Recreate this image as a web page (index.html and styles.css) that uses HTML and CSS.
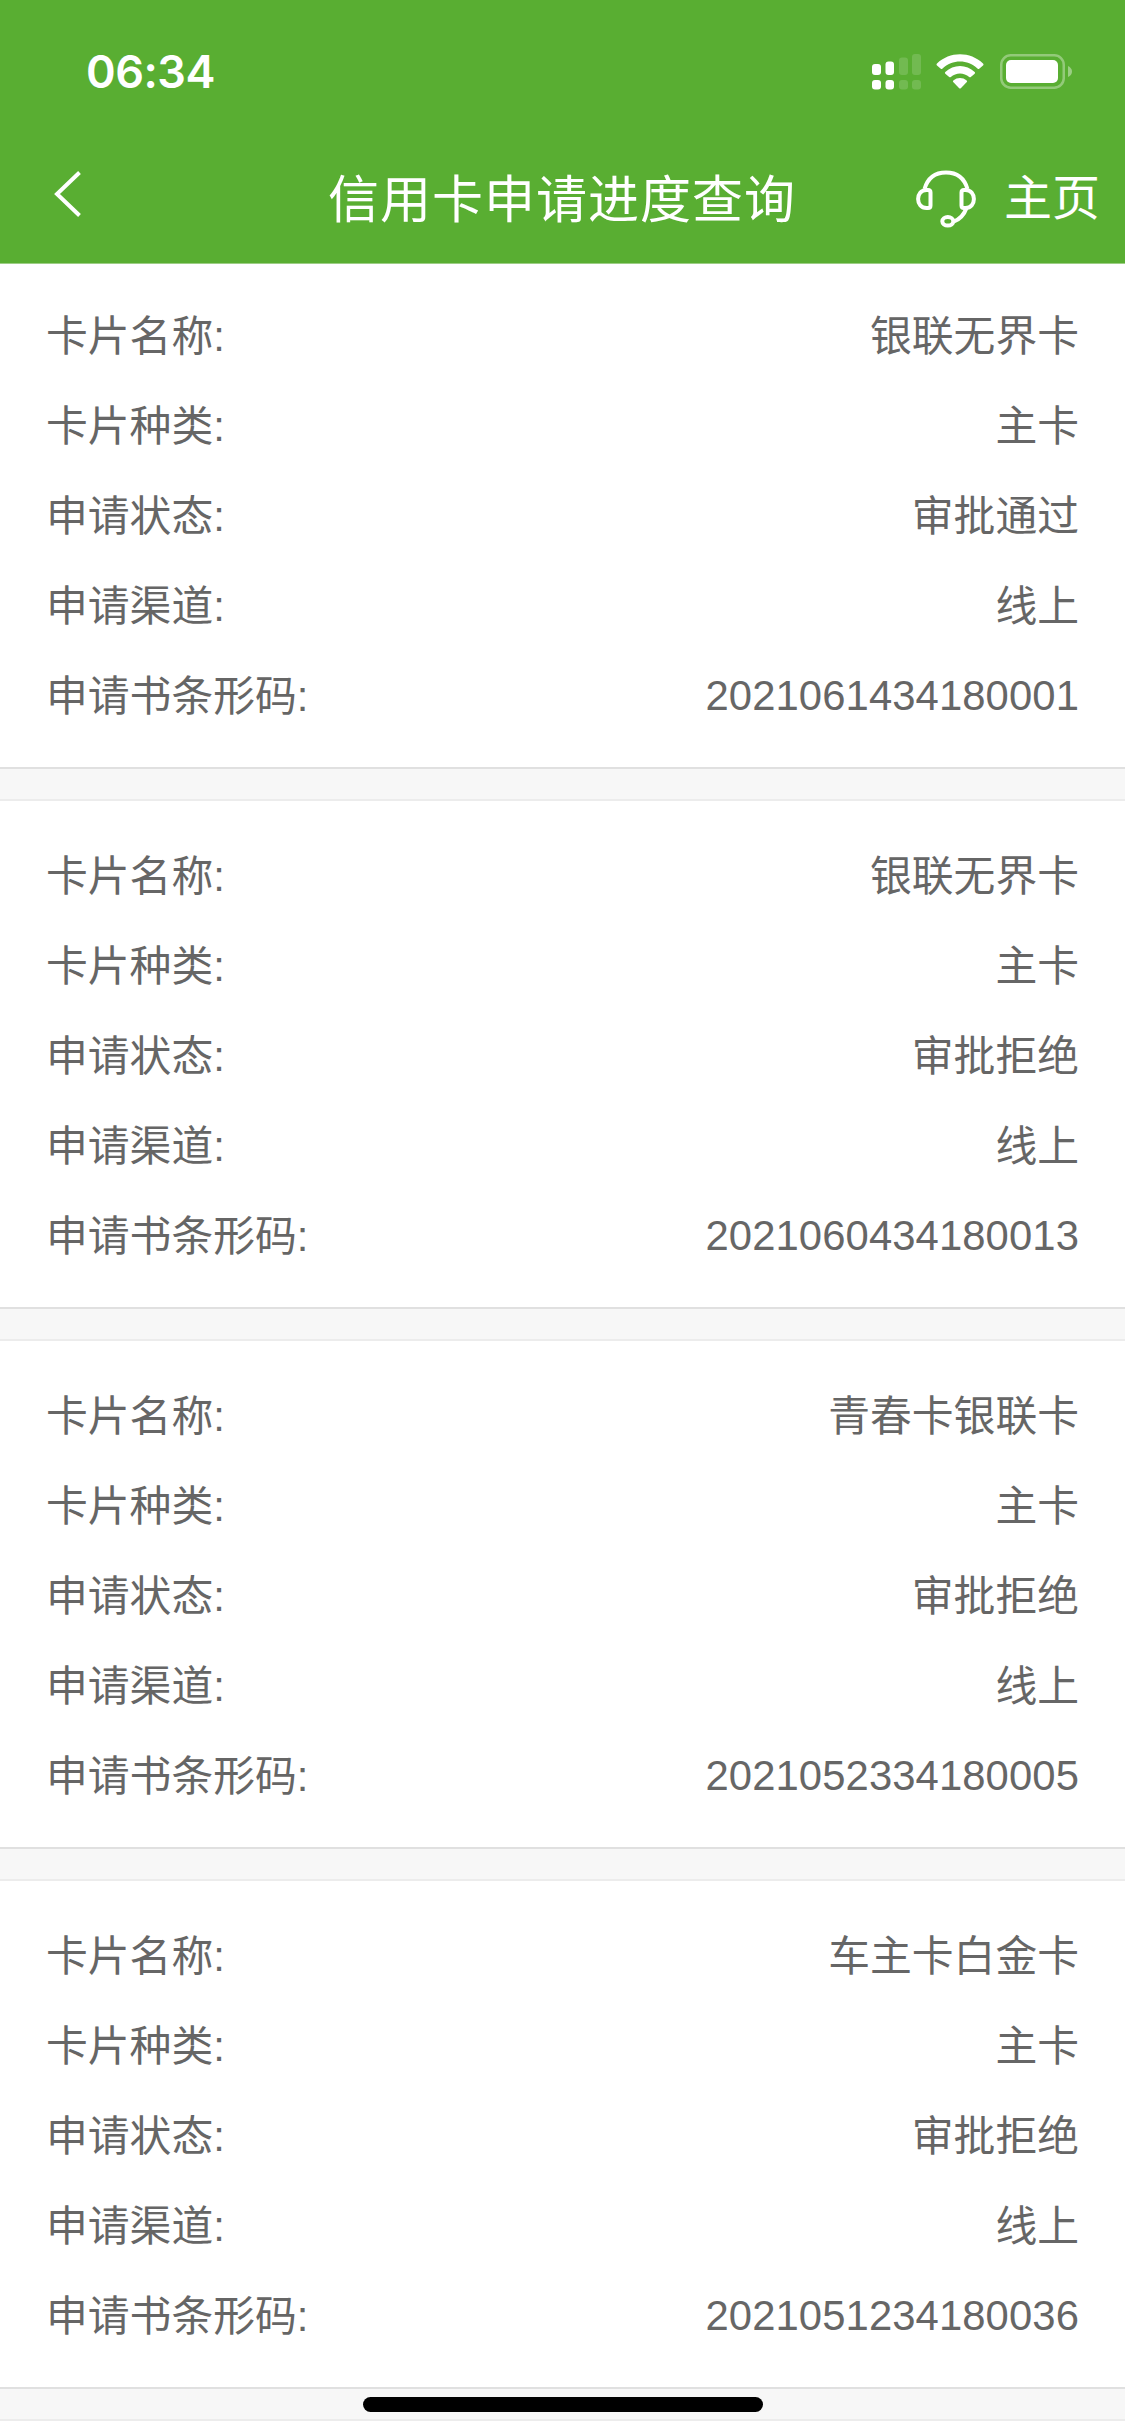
FILE: index.html
```
<!DOCTYPE html>
<html lang="zh-CN">
<head>
  <meta charset="UTF-8">
  <title>信用卡申请进度查询</title>
  <link rel="stylesheet" href="styles.css">
</head>
<body>

  <header class="header">
    <div class="status-bar">
      <span class="time">06:34</span>
      <div class="status-icons">
        <svg class="signal" width="50" height="36" viewBox="0 0 50 36" fill="#fff">
          <rect x="0" y="10" width="9" height="11" rx="3"/>
          <rect x="13.5" y="7.5" width="8.5" height="13.5" rx="3"/>
          <rect x="0" y="26" width="9" height="9.5" rx="3"/>
          <rect x="13.5" y="26" width="8.5" height="9.5" rx="3"/>
          <g opacity="0.15">
            <rect x="27" y="3.5" width="9" height="17.5" rx="3"/>
            <rect x="40" y="0" width="9" height="21" rx="3"/>
            <rect x="27" y="26" width="9" height="9.5" rx="3"/>
            <rect x="40" y="26" width="9" height="9.5" rx="3"/>
          </g>
        </svg>
        <svg class="wifi" width="48" height="36" viewBox="0 0 48 36" fill="#fff">
          <path d="M1 11.5Q0 10.5 1 9.5C13.5 -2.9 34.5 -2.9 47 9.5Q48 10.5 47 11.5L43.2 14.8Q42.5 15.3 41.7 14.7C31.5 5 16.5 5 6.3 14.7Q5.5 15.3 4.8 14.8Z"/>
          <path d="M9.3 19.7Q8.5 18.8 9.3 18C17.5 10 30.5 10 38.7 18Q39.5 18.8 38.7 19.7L34.8 23Q34 23.5 33.2 23C28 18.3 20 18.3 14.8 23Q14 23.5 13.2 23Z"/>
          <path d="M17.2 28Q16.5 27.2 17.3 26.5C21.2 23.2 26.8 23.2 30.7 26.5Q31.5 27.2 30.8 28L24.8 34.2Q24 35 23.2 34.2Z"/>
        </svg>
        <svg class="battery" width="72" height="36" viewBox="0 0 72 36">
          <rect x="1.25" y="1.25" width="62.5" height="32.5" rx="9.5" fill="none" stroke="#fff" stroke-width="2.5" opacity="0.35"/>
          <rect x="6" y="6" width="52" height="23" rx="5" fill="#fff"/>
          <path d="M68 12Q72 14 72 17.5Q72 21 68 23Z" fill="#fff" opacity="0.4"/>
        </svg>
      </div>
    </div>

    <div class="nav-bar">
      <svg class="back" width="32" height="50" viewBox="0 0 32 50" fill="none" stroke="#fff" stroke-width="4">
        <path d="M27.500 3.500L5 25L27.500 46.500"/>
      </svg>
      <h1>信用卡申请进度查询</h1>
      <div class="nav-right">
        <svg class="service" width="60" height="58" viewBox="0 0 60 58" fill="none" stroke="#fff" stroke-width="4" stroke-linejoin="round">
          <path d="M8.5 19C12 7 20 2.500 30 2.500S48 7 51.5 19"/>
          <path d="M12 20H10.500C-0.700 20 -0.700 38 10.500 38H12Q14.500 38 14.500 35.500V22.500Q14.500 20 12 20Z"/>
          <path d="M48 20H49.500C60.700 20 60.700 38 49.500 38H48Q45.500 38 45.500 35.500V22.500Q45.500 20 48 20Z"/>
          <path d="M50.500 38C48 45 44 49 38 51.500"/>
          <ellipse cx="31.800" cy="51.300" rx="5.500" ry="4.300"/>
        </svg>
        <span class="home">主页</span>
      </div>
    </div>
  </header>

  <div class="list">
    <div class="card">
      <div class="row"><span>卡片名称:</span><span>银联无界卡</span></div>
      <div class="row"><span>卡片种类:</span><span>主卡</span></div>
      <div class="row"><span>申请状态:</span><span>审批通过</span></div>
      <div class="row"><span>申请渠道:</span><span>线上</span></div>
      <div class="row"><span>申请书条形码:</span><span class="code">2021061434180001</span></div>
    </div>

    <div class="card">
      <div class="row"><span>卡片名称:</span><span>银联无界卡</span></div>
      <div class="row"><span>卡片种类:</span><span>主卡</span></div>
      <div class="row"><span>申请状态:</span><span>审批拒绝</span></div>
      <div class="row"><span>申请渠道:</span><span>线上</span></div>
      <div class="row"><span>申请书条形码:</span><span class="code">2021060434180013</span></div>
    </div>

    <div class="card">
      <div class="row"><span>卡片名称:</span><span>青春卡银联卡</span></div>
      <div class="row"><span>卡片种类:</span><span>主卡</span></div>
      <div class="row"><span>申请状态:</span><span>审批拒绝</span></div>
      <div class="row"><span>申请渠道:</span><span>线上</span></div>
      <div class="row"><span>申请书条形码:</span><span class="code">2021052334180005</span></div>
    </div>

    <div class="card">
      <div class="row"><span>卡片名称:</span><span>车主卡白金卡</span></div>
      <div class="row"><span>卡片种类:</span><span>主卡</span></div>
      <div class="row"><span>申请状态:</span><span>审批拒绝</span></div>
      <div class="row"><span>申请渠道:</span><span>线上</span></div>
      <div class="row"><span>申请书条形码:</span><span class="code">2021051234180036</span></div>
    </div>

    <div class="card card-next"></div>
  </div>

  <div class="home-indicator"></div>

</body>
</html>
```
FILE: styles.css
```
* {
  box-sizing: border-box;
}

body {
  margin: 0;
  background: #fff;
  color: #666;
  font-family: "Liberation Sans", "Noto Sans CJK SC", sans-serif;
}

/* 顶部 */
.header {
  height: 264px;
  border-bottom: 1px solid #9dce85;
  background: #59ae32;
  color: #fff;
}

.status-bar {
  display: flex;
  justify-content: space-between;
  height: 132px;
  padding: 0 53px 0 86px;
}

.time {
  padding-top: 44px;
  font-family: Inter, sans-serif;
  font-size: 45px;
  font-weight: 600;
  line-height: 56px;
  letter-spacing: -0.5px;
}

.status-icons {
  display: flex;
  padding-top: 54px;
}

.wifi {
  margin-left: 14px;
}

.battery {
  margin-left: 16px;
}

.nav-bar {
  display: grid;
  grid-template-columns: 328px 1fr 328px;
  height: 131px;
}

.back {
  margin: 37px 0 0 52px;
}

h1 {
  margin: 0;
  padding-top: 31px;
  font-size: 51px;
  font-weight: 400;
  line-height: 76px;
  letter-spacing: 1px;
  white-space: nowrap;
}

.nav-right {
  display: flex;
  justify-content: flex-end;
  padding-right: 25px;
}

.service {
  margin: 38px 28px 0 0;
}

.home {
  padding-top: 31px;
  font-size: 48px;
  line-height: 72px;
}

/* 申请记录 */
.list {
  background: #f7f7f7;
}

.card {
  height: 505px;
  padding: 28px 46px 0;
  border-bottom: 2px solid #e0e0e0;
  background: #fff;
}

.card + .card {
  margin-top: 30px;
  height: 510px;
  border-top: 2px solid #ececec;
  padding-top: 31px;
}

.card + .card-next {
  height: 17px;
  padding: 0;
  border-bottom: none;
}

.row {
  display: flex;
  justify-content: space-between;
  height: 90px;
  font-size: 41.8px;
  line-height: 90px;
}

.code {
  margin-top: -1px;
  letter-spacing: 0.1px;
}

.home-indicator {
  position: fixed;
  left: 363px;
  bottom: 23px;
  width: 400px;
  height: 15px;
  border-radius: 8px;
  background: #000;
}
```
